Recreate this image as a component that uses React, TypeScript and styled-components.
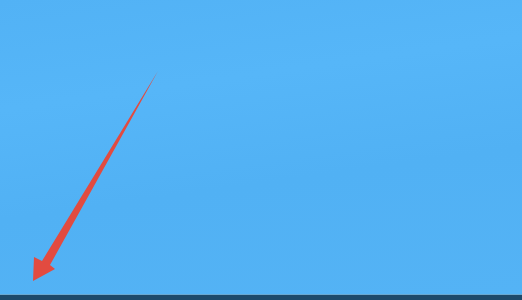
import React from 'react'
import styled, { createGlobalStyle } from 'styled-components'

const GlobalStyle = createGlobalStyle`
  html, body, #root {
    margin: 0;
    padding: 0;
    width: 100%;
    height: 100%;
    overflow: hidden;
  }
  body {
    font-family: "Liberation Sans", Arial, sans-serif;
  }
`

const Screen = styled.div`
  position: relative;
  display: flex;
  flex-direction: column;
  width: 522px;
  height: 300px;
  background: #53b3f6;
`

const Desktop = styled.div`
  flex: 1;
  background: linear-gradient(172deg, #52b2f5 0%, #56b6f8 30%, #51b1f4 60%, #54b3f5 100%);
`

const Taskbar = styled.div`
  height: 5px;
  border-top: 1px solid #6aa8d0;
  background: #1d4a6b;
`

// annotation drawn on top of the desktop
const Annotation = styled.svg`
  position: absolute;
  left: 0;
  top: 0;
  pointer-events: none;
`

const Arrow = () => (
  <Annotation width="522" height="300" viewBox="0 0 522 300">
    <polygon
      points="158,71 50,265 55,269 33,281 34,257 42,261"
      fill="#e24b40"
    />
  </Annotation>
)

export default function App() {
  return (
    <>
      <GlobalStyle />
      <Screen>
        <Desktop />
        <Taskbar />
        <Arrow />
      </Screen>
    </>
  )
}
